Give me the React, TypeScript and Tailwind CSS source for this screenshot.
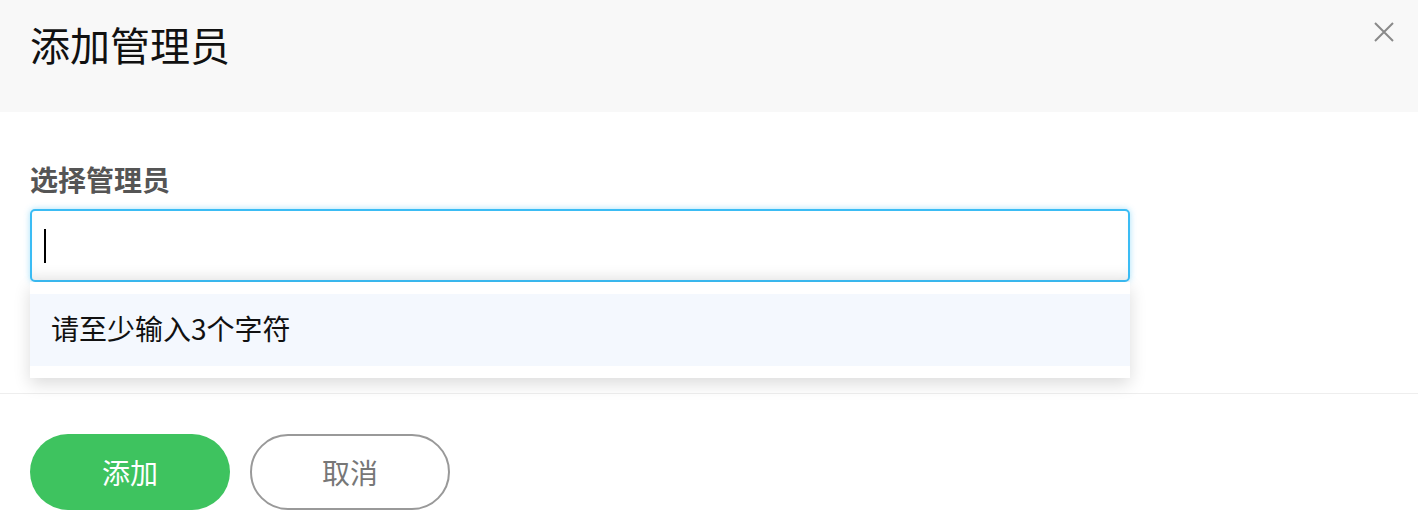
import React from "react";

const font = { fontFamily: '"Noto Sans CJK SC", "Noto Sans", sans-serif' };

export default function App() {
  return (
    <div className="w-[1418px] h-[528px] bg-white overflow-hidden" style={font}>
      <div className="h-[112px] bg-[#f8f8f8] flex items-start justify-between pl-[30px] pr-[24px]">
        <h1 className="text-[40px] leading-none text-[#111] mt-[24px]">添加管理员</h1>
        <button className="mt-[22px] w-[20px] h-[20px] text-[#8a8a8a]">
          <svg viewBox="0 0 20 20" width="20" height="20" fill="none" stroke="currentColor" strokeWidth="2">
            <path d="M1 1L19 19M19 1L1 19" />
          </svg>
        </button>
      </div>
      <div className="px-[30px] pt-[53px] h-[282px] border-b border-[#eeeeee]">
        <div className="text-[28px] leading-none font-bold text-[#555]">选择管理员</div>
        <div className="relative mt-[16px] w-[1100px]">
          <div className="h-[73px] rounded-[5px] border-2 border-[#3bbcf4] bg-white shadow-[0_0_6px_rgba(59,188,244,0.45),inset_0_-12px_14px_-8px_rgba(0,0,0,0.08)] flex items-center pl-[12px]">
            <div className="w-[2px] h-[34px] bg-black" />
          </div>
          <div className="absolute left-0 top-[73px] w-[1100px] bg-white py-[12px] shadow-[0_6px_16px_rgba(0,0,0,0.14)] z-10">
            <div className="h-[72px] bg-[#f4f8fe] flex items-center pl-[21px] pb-[4px] text-[28px] text-[#111]">
              请至少输入3个字符
            </div>
          </div>
        </div>
      </div>
      <div className="flex gap-[20px] px-[30px] pt-[40px]">
        <button className="w-[200px] h-[76px] rounded-full bg-[#3ec35f] text-white text-[28px]">添加</button>
        <button className="w-[200px] h-[76px] rounded-full border-2 border-[#999] bg-white text-[#777] text-[28px]">取消</button>
      </div>
    </div>
  );
}
